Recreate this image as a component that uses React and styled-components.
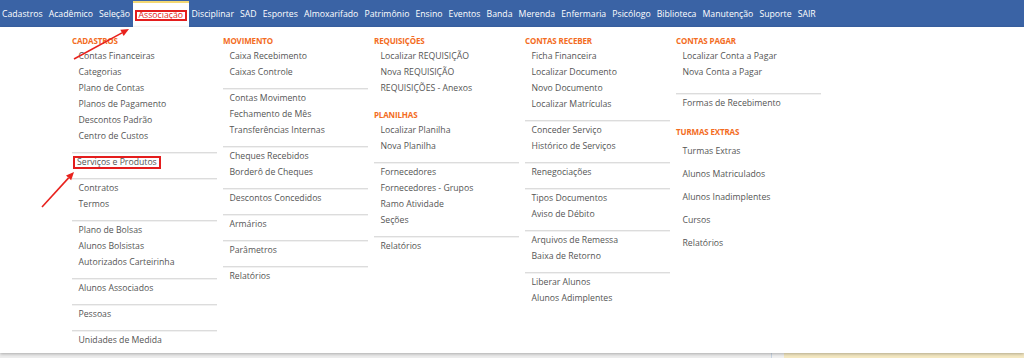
import React from 'react';
import styled, { createGlobalStyle, css } from 'styled-components';

const GlobalStyle = createGlobalStyle`
  html, body {
    margin: 0;
    padding: 0;
    background: #fff;
  }
  body {
    font-family: "Open Sans", "Liberation Sans", sans-serif;
  }
`;

const Page = styled.div`
  position: relative;
  width: 1024px;
  height: 358px;
  overflow: hidden;
  background: #fff;
`;

const NavBar = styled.nav`
  display: flex;
  align-items: stretch;
  height: 27px;
  padding-left: 0;
  background: #3a63a5;
`;

const NavItem = styled.a`
  display: flex;
  align-items: center;
  padding: 0 3.05px;
  color: #fff;
  font-size: 8.7px;
  white-space: nowrap;
  cursor: pointer;

  &:first-child {
    padding-left: 2px;
  }

  ${p => p.$active && css`
    background: #fff;
    color: #e3241c;
    border-top: 2px solid #f3d873;
    margin-top: 1px;
    padding: 0 1.5px;
  `}
`;

const RedBox = styled.span`
  display: inline-block;
  border: 2px solid #e41d1d;
  padding: 0 2px;
  line-height: ${p => p.$lh || 7}px;
`;

const Dropdown = styled.div`
  display: grid;
  grid-template-columns: repeat(5, 145px);
  column-gap: 6px;
  align-items: start;
  box-sizing: border-box;
  height: 326px;
  padding: 6px 0 0 72px;
  background: #fff;
  box-shadow: 0 1px 3px rgba(0, 0, 0, 0.28);
  position: relative;
`;

const Column = styled.ul`
  display: flex;
  flex-direction: column;
  list-style: none;
  margin: 0;
  padding: 0;
`;

const Heading = styled.li`
  font-size: 8px;
  font-weight: 700;
  line-height: 15px;
  color: #f36c23;
  letter-spacing: -0.15px;
  margin-top: ${p => p.$mt || 0}px;
`;

const Item = styled.li`
  font-size: 8.7px;
  line-height: 16px;
  height: 16px;
  color: #555;
  padding-left: 6.5px;
  margin-top: ${p => p.$mt || 0}px;
  white-space: nowrap;

  ${p => p.$boxed && css`
    padding-left: 1px;
  `}
`;

const Divider = styled.li`
  height: 1px;
  margin: ${p => (p.$mt ?? 8)}px 0 1px;
  background: ${p => (p.$hidden ? 'transparent' : '#dcdcdc')};
  box-shadow: ${p => (p.$hidden ? 'none' : '0 1px 0 #f1f1f1')};
`;

const Footer = styled.div`
  display: flex;
  height: 5px;
`;

const FooterLeft = styled.div`
  width: 771px;
  background: #ececec;
  border-right: 1px solid #c9d5e3;
`;

const FooterMid = styled.div`
  width: 12px;
  background: #f0f0f0;
`;

const FooterRight = styled.div`
  flex: 1;
  background: #f4e8c2;
`;

const Annotations = styled.svg`
  position: absolute;
  top: 0;
  left: 0;
  pointer-events: none;
`;

const navItems = [
  'Cadastros', 'Acadêmico', 'Seleção', 'Associação', 'Disciplinar', 'SAD', 'Esportes',
  'Almoxarifado', 'Patrimônio', 'Ensino', 'Eventos', 'Banda', 'Merenda', 'Enfermaria',
  'Psicólogo', 'Biblioteca', 'Manutenção', 'Suporte', 'SAIR',
];

const SEP = { sep: true };

const columns = [
  [
    { h: 'CADASTROS' },
    'Contas Financeiras', 'Categorias', 'Plano de Contas', 'Planos de Pagamento',
    'Descontos Padrão', 'Centro de Custos',
    SEP,
    { text: 'Serviços e Produtos', boxed: true },
    SEP,
    'Contratos', 'Termos',
    SEP,
    'Plano de Bolsas', 'Alunos Bolsistas', 'Autorizados Carteirinha',
    SEP,
    'Alunos Associados',
    SEP,
    'Pessoas',
    SEP,
    'Unidades de Medida',
  ],
  [
    { h: 'MOVIMENTO' },
    'Caixa Recebimento', 'Caixas Controle',
    SEP,
    'Contas Movimento', 'Fechamento de Mês', 'Transferências Internas',
    SEP,
    'Cheques Recebidos', 'Borderô de Cheques',
    SEP,
    'Descontos Concedidos',
    SEP,
    'Armários',
    SEP,
    'Parâmetros',
    SEP,
    'Relatórios',
  ],
  [
    { h: 'REQUISIÇÕES' },
    'Localizar REQUISIÇÃO', 'Nova REQUISIÇÃO', 'REQUISIÇÕES - Anexos',
    { sep: true, hidden: true, mt: 9 },
    { h: 'PLANILHAS' },
    'Localizar Planilha', 'Nova Planilha',
    SEP,
    'Fornecedores', 'Fornecedores - Grupos', 'Ramo Atividade', 'Seções',
    SEP,
    'Relatórios',
  ],
  [
    { h: 'CONTAS RECEBER' },
    'Ficha Financeira', 'Localizar Documento', 'Novo Documento', 'Localizar Matrículas',
    SEP,
    'Conceder Serviço', 'Histórico de Serviços',
    SEP,
    'Renegociações',
    SEP,
    'Tipos Documentos', 'Aviso de Débito',
    SEP,
    'Arquivos de Remessa', 'Baixa de Retorno',
    SEP,
    'Liberar Alunos', 'Alunos Adimplentes',
  ],
  [
    { h: 'CONTAS PAGAR' },
    'Localizar Conta a Pagar', 'Nova Conta a Pagar',
    { sep: true, mt: 13 },
    'Formas de Recebimento',
    { h: 'TURMAS EXTRAS', mt: 13 },
    { text: 'Turmas Extras', mt: 4 },
    { text: 'Alunos Matriculados', mt: 7 },
    { text: 'Alunos Inadimplentes', mt: 7 },
    { text: 'Cursos', mt: 7 },
    { text: 'Relatórios', mt: 7 },
  ],
];

const renderEntry = (entry, i) => {
  if (typeof entry === 'string') return <Item key={i}>{entry}</Item>;
  if (entry.h) return <Heading key={i} $mt={entry.mt}>{entry.h}</Heading>;
  if (entry.sep) return <Divider key={i} $mt={entry.mt} $hidden={entry.hidden} />;
  if (entry.boxed) {
    return (
      <Item key={i} $boxed>
        <RedBox $lh={9}>{entry.text}</RedBox>
      </Item>
    );
  }
  return <Item key={i} $mt={entry.mt}>{entry.text}</Item>;
};

const Arrow = ({ x1, y1, tx, ty }) => {
  const dx = tx - x1;
  const dy = ty - y1;
  const len = Math.hypot(dx, dy);
  const ux = dx / len;
  const uy = dy / len;
  const bx = tx - ux * 8;
  const by = ty - uy * 8;
  const nx = -uy * 3.5;
  const ny = ux * 3.5;
  return (
    <g fill="#e8221d" stroke="#e8221d">
      <line x1={x1} y1={y1} x2={bx} y2={by} strokeWidth="1.6" />
      <polygon
        stroke="none"
        points={`${tx},${ty} ${bx + nx},${by + ny} ${bx - nx},${by - ny}`}
      />
    </g>
  );
};

export default function App() {
  return (
    <Page>
      <GlobalStyle />
      <NavBar>
        {navItems.map(name =>
          name === 'Associação' ? (
            <NavItem key={name} $active>
              <RedBox>{name}</RedBox>
            </NavItem>
          ) : (
            <NavItem key={name}>{name}</NavItem>
          )
        )}
      </NavBar>
      <Dropdown>
        {columns.map((col, ci) => (
          <Column key={ci}>{col.map(renderEntry)}</Column>
        ))}
      </Dropdown>
      <Footer>
        <FooterLeft />
        <FooterMid />
        <FooterRight />
      </Footer>
      <Annotations width="1024" height="358" viewBox="0 0 1024 358">
        <Arrow x1={74} y1={59} tx={129} ty={29} />
        <Arrow x1={42} y1={207} tx={74} ty={172} />
      </Annotations>
    </Page>
  );
}
